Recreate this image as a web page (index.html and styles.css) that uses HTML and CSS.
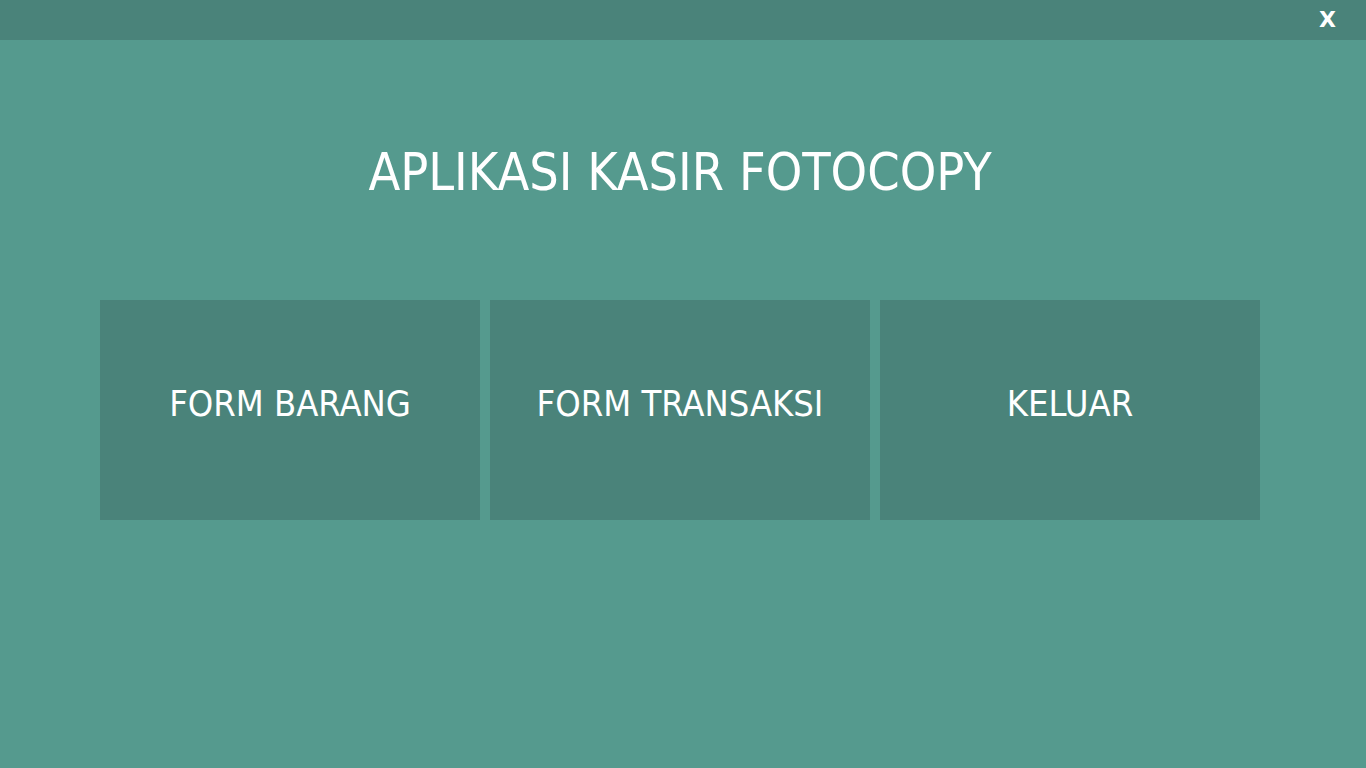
FILE: index.html
```html
<!DOCTYPE html>
<html>
<head>
<meta charset="utf-8">
<link rel="stylesheet" href="styles.css">
</head>
<body>
<div class="topbar"><span class="close">X</span></div>
<main class="main">
  <h1 class="title">APLIKASI KASIR FOTOCOPY</h1>
  <div class="menu">
    <div class="tile">FORM BARANG</div>
    <div class="tile">FORM TRANSAKSI</div>
    <div class="tile">KELUAR</div>
  </div>
</main>
</body>
</html>
```
FILE: styles.css
```css
html, body {
  margin: 0;
  padding: 0;
  height: 100%;
}
body {
  background: #559a8e;
  font-family: "DejaVu Sans Condensed", "DejaVu Sans", sans-serif;
  color: #ffffff;
  overflow: hidden;
}
.topbar {
  height: 40px;
  background: #4a837a;
  display: flex;
  justify-content: flex-end;
  align-items: center;
  padding-right: 30px;
}
.close {
  font-family: "DejaVu Sans", sans-serif;
  font-weight: bold;
  font-size: 22px;
  line-height: 1;
}
.main {
  display: flex;
  flex-direction: column;
  padding-left: 100px;
}
.title {
  width: 1160px;
  margin: 102px 0 0;
  height: 158px;
  font-size: 51.7px;
  font-weight: normal;
  line-height: 60px;
  text-align: center;
}
.menu {
  display: flex;
  gap: 10px;
}
.tile {
  width: 380px;
  height: 220px;
  background: #4a837a;
  display: flex;
  align-items: center;
  justify-content: center;
  padding-bottom: 14px;
  box-sizing: border-box;
  font-size: 36px;
}
```
